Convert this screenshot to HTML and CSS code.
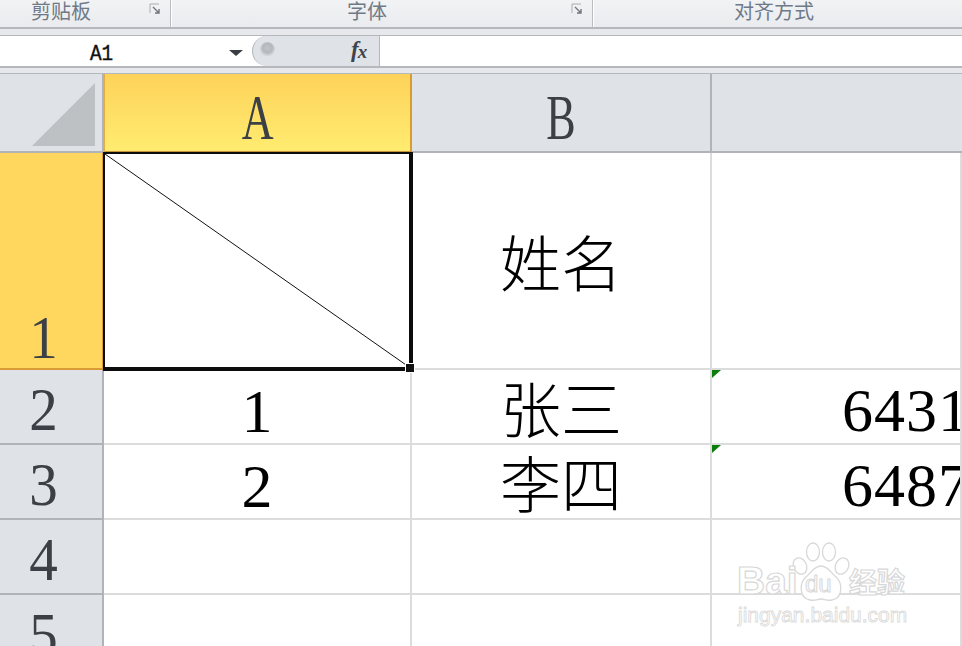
FILE: index.html
```html
<!DOCTYPE html>
<html lang="zh-CN">
<head>
<meta charset="utf-8">
<title>Excel</title>
<link rel="stylesheet" href="styles.css">
</head>
<body>
<div class="app">
  <div class="ribbon">
    <div class="group g1"><span class="glabel">剪贴板</span>
      <svg class="launcher" viewBox="0 0 12 12"><path d="M1 10V1h9" fill="none" stroke="#a9adb3"/><path d="M4 4l6 6M10 6v4H6" fill="none" stroke="#70757c" stroke-width="1.4"/></svg>
    </div>
    <div class="group g2"><span class="glabel">字体</span>
      <svg class="launcher" viewBox="0 0 12 12"><path d="M1 10V1h9" fill="none" stroke="#a9adb3"/><path d="M4 4l6 6M10 6v4H6" fill="none" stroke="#70757c" stroke-width="1.4"/></svg>
    </div>
    <div class="group g3"><span class="glabel">对齐方式</span></div>
  </div>
  <div class="formula">
    <div class="namebox"><span class="nametext">A1</span><span class="caret"></span></div>
    <div class="fxwrap">
      <span class="knob"></span>
      <span class="fx">f<sub>x</sub></span>
    </div>
    <div class="finput"></div>
  </div>
  <div class="sheet">
    <div class="corner"><span class="tri"></span></div>
    <div class="colh active"><span class="hcol">A</span></div>
    <div class="colh"><span class="hcol">B</span></div>
    <div class="colh last"></div>

    <div class="rowh active r1"><span class="hrow">1</span></div>
    <div class="cell"></div>
    <div class="cell mid cjk">姓名</div>
    <div class="cell"></div>

    <div class="rowh"><span class="hrow">2</span></div>
    <div class="cell mid">1</div>
    <div class="cell mid cjk">张三</div>
    <div class="cell num"><i class="flag"></i>6431</div>

    <div class="rowh"><span class="hrow">3</span></div>
    <div class="cell mid">2</div>
    <div class="cell mid cjk">李四</div>
    <div class="cell num"><i class="flag"></i>6487</div>

    <div class="rowh"><span class="hrow">4</span></div>
    <div class="cell"></div>
    <div class="cell"></div>
    <div class="cell"></div>

    <div class="rowh"><span class="hrow">5</span></div>
    <div class="cell"></div>
    <div class="cell"></div>
    <div class="cell"></div>

    <div class="selection">
      <svg class="diag" viewBox="0 0 100 100" preserveAspectRatio="none"><line x1="0" y1="0" x2="100" y2="100" stroke="#111" stroke-width="1" vector-effect="non-scaling-stroke"/></svg>
      <span class="handle"></span>
    </div>
  </div>
  <div class="watermark">
    <svg class="paw" viewBox="0 0 60 60">
      <g fill="#fff" stroke="#d8d8d8" stroke-width="1.3">
        <ellipse cx="9" cy="24" rx="6.5" ry="8.5" transform="rotate(-25 9 24)"/>
        <ellipse cx="22" cy="10" rx="6.5" ry="9"/>
        <ellipse cx="38" cy="10" rx="6.5" ry="9"/>
        <ellipse cx="51" cy="24" rx="6.5" ry="8.5" transform="rotate(25 51 24)"/>
        <path d="M30 24c7 0 10 7 15 11 6 5 8 21-4 23-5 1-8-1-11-1s-6 2-11 1C7 56 9 40 15 35c5-4 8-11 15-11z"/>
      </g>
    </svg>
    <span class="wm-bai">Bai</span><span class="wm-du">du</span><span class="wm-jy">经验</span>
    <span class="wm-url">jingyan.baidu.com</span>
  </div>
</div>
</body>
</html>
```
FILE: styles.css
```css
* { box-sizing: border-box; }
html, body { margin: 0; padding: 0; }
body { width: 962px; height: 646px; overflow: hidden; background: #fff; }
.app { position: relative; width: 962px; height: 646px; overflow: hidden; display: flex; flex-direction: column; background: #e6e8eb; }

.ribbon { height: 29px; flex: none; display: flex; background: linear-gradient(#f2f3f5, #e9ebee); border-bottom: 2px solid #b4b8bd; }
.group { position: relative; display: flex; justify-content: center; align-items: flex-start; border-right: 1px solid #b9bcc1; box-shadow: 1px 0 0 #fff; }
.g1 { width: 171px; padding-right: 48px; }
.g2 { width: 421px; padding-right: 30px; margin-left: 1px; }
.g3 { flex: 1; border-right: 0; box-shadow: none; padding-right: 8px; margin-left: 1px; }
.glabel { font: 20px/21px "Noto Sans CJK SC", sans-serif; color: #6f7a88; }
.launcher { position: absolute; right: 9px; top: 3px; width: 12px; height: 12px; }

.formula { height: 33px; margin-top: 6px; flex: none; display: flex; background: #fff; border-top: 1px solid #b4b8bd; border-bottom: 2px solid #b4b8bd; }
.namebox { width: 252px; display: flex; align-items: center; position: relative; padding-left: 90px; padding-top: 7px; }
.nametext { font: 400 22px/30px "Liberation Mono", monospace; color: #111; -webkit-text-stroke: .4px #111; transform: scaleX(.88); transform-origin: left; }
.caret { position: absolute; left: 229px; top: 14px; border: 7px solid transparent; border-top: 6px solid #3a3d42; border-bottom: 0; }
.fxwrap { width: 128px; position: relative; background: #dfe2e6; border: 1px solid #b4b8bd; border-width: 0 1px 0 1px; border-radius: 16px 0 0 16px; }
.knob { position: absolute; left: 7px; top: 6px; width: 15px; height: 15px; border-radius: 50%; background: radial-gradient(circle at 50% 40%, #c2c4c8, #b4b7bb 40%, #dfe2e6 75%); }
.fx { position: absolute; left: 98px; top: 1px; font: italic 700 23px/26px "Liberation Serif", serif; color: #3f434a; }
.fx sub { font-size: 19px; line-height: 0; vertical-align: -1px; margin-left: -1px; }
.finput { flex: 1; }

.sheet { position: relative; margin-top: 5px; flex: 1; display: grid; grid-template-columns: 104px 308px 300px 1fr; grid-template-rows: 79px 217px 75px 75px 75px 75px; background: #fff; font-family: "Liberation Serif", serif; border-top: 1px solid #b4b8bd; }
.corner { background: #dfe2e6; border-right: 2px solid #b0b4b9; border-bottom: 2px solid #b0b4b9; position: relative; }
.tri { position: absolute; left: 32px; top: 9px; width: 63px; height: 63px; background: #bec1c4; clip-path: polygon(100% 0, 100% 100%, 0 100%); }
.colh { background: #dfe2e6; border-right: 2px solid #b0b4b9; border-bottom: 2px solid #b0b4b9; display: flex; align-items: center; justify-content: center; color: #3c4046; }
.hcol { display: inline-block; font-size: 63px; line-height: 1; transform: scaleX(.7); padding-top: 12px; }
.colh.last { border-right: 0; }
.colh.active { background: linear-gradient(#fdd25a, #ffec70); border-right: 2px solid #d99b35; border-bottom: 2px solid #c9923a; border-left: 1px solid #e4ac45; }
.rowh { background: #dfe2e6; border-right: 2px solid #b0b4b9; border-bottom: 2px solid #b0b4b9; display: flex; align-items: center; justify-content: center; color: #3c4046; padding-right: 16px; }
.hrow { display: inline-block; font-size: 62px; line-height: 1; transform: scaleX(.92); padding-top: 4px; }
.rowh.active { background: #ffd75f; border-right-color: #d99b35; border-bottom-color: #d99b35; align-items: flex-end; }
.cell { border-right: 2px solid #dcdcdc; border-bottom: 2px solid #dcdcdc; position: relative; display: flex; align-items: center; font-size: 62px; line-height: 1; color: #000; white-space: nowrap; }
.cell.mid { justify-content: center; padding-top: 8px; }
.cell.cjk { font: 300 61px/1 "Noto Sans CJK SC", sans-serif; padding-top: 0; }
.cell.num { padding-left: 130px; letter-spacing: 1px; overflow: hidden; padding-top: 6px; }
.flag { position: absolute; left: 0; top: 0; width: 9px; height: 8px; background: #0a7d0a; clip-path: polygon(0 0, 100% 0, 0 100%); }

.selection { position: absolute; left: 103px; top: 78px; width: 310px; height: 219px; border: solid #0c0c0c; border-width: 2px 4px 4px 2px; }
.diag { position: absolute; inset: 0; width: 100%; height: 100%; }
.handle { position: absolute; right: -6px; bottom: -6px; width: 10px; height: 10px; background: #111; border: 1px solid #fff; }

.watermark { position: absolute; left: 736px; top: 540px; width: 176px; height: 88px; }
.paw { position: absolute; left: 55px; top: 2px; width: 60px; height: 60px; }
.wm-bai, .wm-du, .wm-jy { position: absolute; font-family: "Liberation Sans", sans-serif; font-weight: 700; color: #fff; -webkit-text-stroke: 1.2px #d8d8d8; }
.wm-bai { left: 1px; top: 21px; font-size: 39px; line-height: 40px; }
.wm-du { left: 69px; top: 31px; font-size: 24px; line-height: 26px; font-weight: 400; -webkit-text-stroke: 1px #d8d8d8; }
.wm-jy { left: 113px; top: 24px; font: 700 28px/34px "Noto Sans CJK SC", sans-serif; }
.wm-url { position: absolute; left: 2px; top: 62px; font: 400 21px/26px "Liberation Sans", sans-serif; color: #fff; -webkit-text-stroke: .9px #dcdcdc; white-space: nowrap; }
```
